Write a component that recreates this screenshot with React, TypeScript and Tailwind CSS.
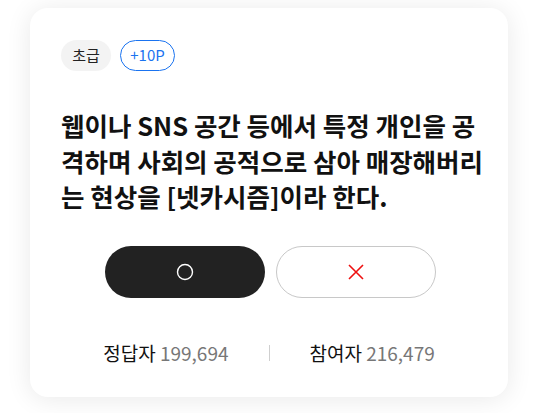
import React from 'react';

const font = { fontFamily: '"Noto Sans CJK KR", "Noto Sans", sans-serif' };

const QuizCard: React.FC = () => {
  return (
    <div className="w-[478px] rounded-[18px] bg-white px-[31px] pt-[32px] pb-[31px] shadow-[0_2px_26px_rgba(0,0,0,0.09)]">
      <div className="flex items-center gap-[9px]">
        <span className="flex h-[31px] w-[50px] items-center justify-center rounded-full bg-[#f3f3f3] text-[15px] text-[#222]">
          초급
        </span>
        <span className="flex h-[31px] w-[55px] items-center justify-center rounded-full border border-[#1a73f0] text-[15px] text-[#1a73f0]">
          +10P
        </span>
      </div>

      <p className="mt-[36px] -mr-[6px] break-all text-[25.5px] font-bold leading-[35.5px] text-[#111]">
        웹이나 SNS 공간 등에서 특정 개인을 공격하며 사회의 공적으로 삼아 매장해버리는 현상을 [넷카시즘]이라 한다.
      </p>

      <div className="mt-[32px] flex justify-center gap-[11px] pl-[2px]">
        <button className="flex h-[52px] w-[160px] items-center justify-center rounded-full bg-[#222]">
          <svg width="18" height="18" viewBox="0 0 18 18" fill="none">
            <circle cx="9" cy="9" r="7.5" stroke="#fff" strokeWidth="1.4" />
          </svg>
        </button>
        <button className="flex h-[52px] w-[160px] items-center justify-center rounded-full border border-[#c8c8c8] bg-white">
          <svg width="16" height="16" viewBox="0 0 16 16" fill="none">
            <path d="M1 1L15 15M15 1L1 15" stroke="#ee1111" strokeWidth="1.6" />
          </svg>
        </button>
      </div>

      <div className="mt-[42px] flex items-center justify-center gap-[40px] text-[19px] leading-[26px]">
        <span className="text-[#111]">
          정답자 <span className="text-[#777]">199,694</span>
        </span>
        <span className="h-[16px] w-px bg-[#cfcfcf]" />
        <span className="text-[#111]">
          참여자 <span className="text-[#777]">216,479</span>
        </span>
      </div>
    </div>
  );
};

export default function App() {
  return (
    <div className="min-h-screen bg-white pl-[30px] pt-[8px]" style={font}>
      <QuizCard />
    </div>
  );
}
